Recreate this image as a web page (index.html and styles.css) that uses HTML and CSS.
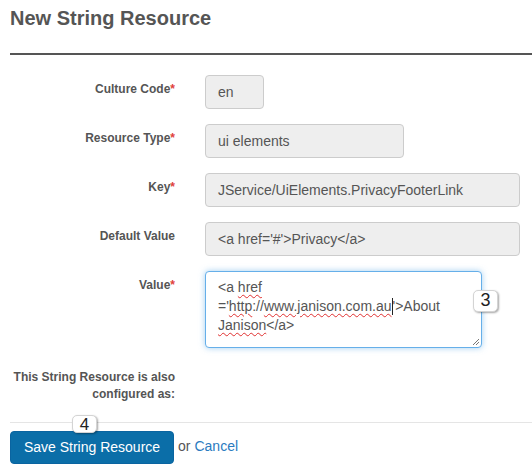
FILE: index.html
```html
<!DOCTYPE html>
<html>
<head>
<meta charset="utf-8">
<link rel="stylesheet" href="styles.css">
</head>
<body>
<div class="page">
  <h1 class="title">New String Resource</h1>
  <div class="title-rule"></div>
  <div class="form">
    <label class="label">Culture Code<span class="req">*</span></label>
    <div class="field"><div class="input w-xs">en</div></div>

    <label class="label">Resource Type<span class="req">*</span></label>
    <div class="field"><div class="input w-sm">ui elements</div></div>

    <label class="label">Key<span class="req">*</span></label>
    <div class="field"><div class="input w-lg">JService/UiElements.PrivacyFooterLink</div></div>

    <label class="label">Default Value</label>
    <div class="field"><div class="input w-lg">&lt;a href='#'&gt;Privacy&lt;/a&gt;</div></div>

    <label class="label">Value<span class="req">*</span></label>
    <div class="field">
      <div class="textarea">
        <div class="ta-line">&lt;a <span class="sp">href</span></div>
        <div class="ta-line">='<span class="sp">http</span>://<span class="sp">www.janison.com.au</span><span class="caret"></span>'&gt;About</div>
        <div class="ta-line"><span class="sp">Janison</span>&lt;/a&gt;</div>
        <svg class="grip" width="9" height="9" viewBox="0 0 9 9"><path d="M8 2 L2 8 M8 5 L5 8" stroke="#777" stroke-width="1"/></svg>
        <div class="badge badge-3">3</div>
      </div>
    </div>

    <label class="label label-multi">This String Resource is also configured as:</label>
    <div class="field"></div>
  </div>
  <div class="footer">
    <div class="badge badge-4">4</div>
    <button class="btn">Save String Resource</button><span class="or">or</span><a class="cancel" href="#">Cancel</a>
  </div>
</div>
</body>
</html>
```
FILE: styles.css
```css
html, body {
  margin: 0;
  padding: 0;
  background: #fff;
  overflow: hidden;
}
body {
  font-family: "Liberation Sans", Arial, sans-serif;
  color: #555;
}
.page {
  width: 532px;
}
.title {
  margin: 0;
  padding: 6px 0 0 10px;
  font-size: 20px;
  line-height: 24px;
  font-weight: bold;
  color: #555;
}
.title-rule {
  margin: 23px 0 0 10px;
  height: 2px;
  background: #555;
}
.form {
  display: grid;
  grid-template-columns: 165px 1fr;
  column-gap: 30px;
  row-gap: 15px;
  padding-left: 10px;
  margin-top: 20px;
}
.label {
  text-align: right;
  font-size: 12px;
  line-height: 17px;
  font-weight: bold;
  color: #555;
  padding-top: 6px;
}
.req {
  color: #e0413b;
}
.field {
  position: relative;
}
.input {
  box-sizing: border-box;
  height: 34px;
  padding: 6px 12px;
  font-size: 14px;
  line-height: 20px;
  color: #555;
  background: #eee;
  border: 1px solid #ccc;
  border-radius: 4px;
  white-space: nowrap;
}
.w-xs { width: 59px; }
.w-sm { width: 199px; }
.w-lg { width: 315px; }
.textarea {
  position: relative;
  box-sizing: border-box;
  width: 277px;
  height: 77px;
  padding: 6px 12px 5px;
  font-size: 14px;
  line-height: 19px;
  color: #555;
  background: #fff;
  border: 1px solid #66afe9;
  border-radius: 4px;
  box-shadow: 0 0 6px rgba(102, 175, 233, 0.6);
}
.ta-line {
  white-space: nowrap;
}
.sp {
  text-decoration: underline wavy #e03030;
  text-decoration-thickness: 1px;
  text-underline-offset: 2px;
}
.caret {
  display: inline-block;
  width: 1px;
  height: 17px;
  background: #222;
  vertical-align: -4px;
}
.grip {
  position: absolute;
  right: 1px;
  bottom: 1px;
}
.badge {
  position: absolute;
  box-sizing: border-box;
  background: #fff;
  border: 1px solid #d4d4d4;
  border-radius: 5px;
  box-shadow: 1px 1px 2px rgba(0, 0, 0, 0.35);
  font-size: 18px;
  line-height: 19px;
  color: #222;
  text-align: center;
}
.badge-3 {
  left: 267px;
  top: 18px;
  width: 25px;
  height: 22px;
}
.label-multi {
  padding-top: 6px;
}
.footer {
  position: relative;
  margin: 19px 0 0 10px;
  border-top: 1px solid #e5e5e5;
  padding-top: 8px;
  font-size: 14px;
  line-height: 20px;
}
.badge-4 {
  left: 62px;
  top: -8px;
  width: 25px;
  height: 18px;
  line-height: 17px;
  font-size: 17px;
}
.btn {
  box-sizing: border-box;
  height: 33px;
  width: 164px;
  padding: 6px 12px;
  font-family: "Liberation Sans", Arial, sans-serif;
  font-size: 14px;
  line-height: 19px;
  color: #fff;
  background: #0b6ea8;
  border: 1px solid #0a64a0;
  border-radius: 4px;
  vertical-align: middle;
}
.or {
  color: #555;
  margin-left: 4px;
  margin-right: 4px;
}
.cancel {
  color: #2a7bc0;
  text-decoration: none;
}
```
